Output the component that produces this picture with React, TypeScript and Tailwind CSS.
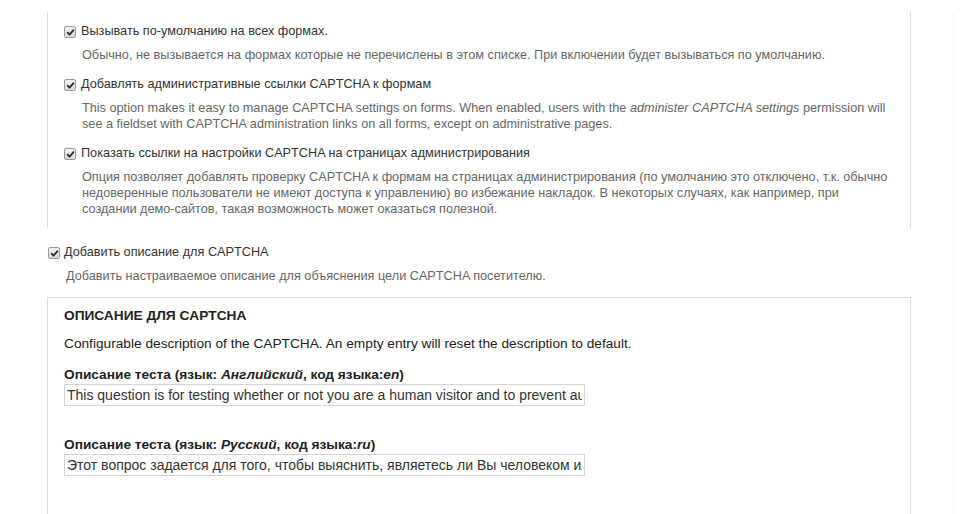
import React from 'react';

// Grey GTK-style checked checkbox
function Check() {
  return (
    <span className="inline-flex h-[12px] w-[12px] shrink-0 items-center justify-center rounded-[2px] border border-[#9a9a9a] bg-gradient-to-b from-[#f4f4f4] to-[#d8d8d8]">
      <svg viewBox="0 0 10 10" className="h-[9px] w-[9px]">
        <path d="M1.8 5.2 L4 7.4 L8.3 2.4" fill="none" stroke="#2b2b2b" strokeWidth="1.9" strokeLinecap="round" strokeLinejoin="round" />
      </svg>
    </span>
  );
}

function Option({ label, children, first }: { label: string; children: React.ReactNode; first?: boolean }) {
  return (
    <div className={first ? '' : 'mt-[13px]'}>
      <label className="flex h-[18px] items-center gap-[5px] text-[12.7px] text-[#333]">
        <Check />
        <span>{label}</span>
      </label>
      <div className="mt-[6px] pl-[18px] text-[12.7px] leading-[16px] text-[#666]">{children}</div>
    </div>
  );
}

function LangField({ lang, code, value, className }: { lang: string; code: string; value: string; className?: string }) {
  return (
    <div className={className}>
      <div className="h-[18px] text-[13.7px] font-bold leading-[18px] text-[#222]">
        Описание теста (язык: <em>{lang}</em>, код языка:<em>{code}</em>)
      </div>
      <input
        readOnly
        value={value}
        className="block h-[22px] w-[521px] border border-[#d4d4d4] bg-white px-[2px] text-[14px] text-[#333] outline-none"
      />
    </div>
  );
}

export default function App() {
  return (
    <div className="h-[514px] w-[962px] overflow-hidden bg-white font-['Liberation_Sans',Arial,sans-serif]">
      <div className="mt-[12px] w-[954px] border-r border-[#f2f2f2] pl-[47px]">
        {/* Nested settings */}
        <div className="w-[864px] border-x border-[#dcdcdc] pb-[11px] pl-[16px] pt-[11px]">
          <Option label="Вызывать по-умолчанию на всех формах." first>
            Обычно, не вызывается на формах которые не перечислены в этом списке. При включении будет вызываться по умолчанию.
          </Option>
          <Option label="Добавлять административные ссылки CAPTCHA к формам">
            This option makes it easy to manage CAPTCHA settings on forms. When enabled, users with the{' '}
            <em>administer CAPTCHA settings</em> permission will
            <br />
            see a fieldset with CAPTCHA administration links on all forms, except on administrative pages.
          </Option>
          <Option label="Показать ссылки на настройки CAPTCHA на страницах администрирования">
            Опция позволяет добавлять проверку CAPTCHA к формам на страницах администрирования (по умолчанию это отключено, т.к. обычно
            <br />
            недоверенные пользователи не имеют доступа к управлению) во избежание накладок. В некоторых случаях, как например, при
            <br />
            создании демо-сайтов, такая возможность может оказаться полезной.
          </Option>
        </div>

        {/* Description toggle */}
        <div className="mt-[16px] pl-px">
          <label className="flex h-[18px] items-center gap-[4px] text-[12.7px] text-[#333]">
            <Check />
            <span>Добавить описание для CAPTCHA</span>
          </label>
          <div className="mt-[6px] pl-[18px] text-[12.7px] leading-[16px] text-[#666]">
            Добавить настраиваемое описание для объяснения цели CAPTCHA посетителю.
          </div>
        </div>

        {/* Description fieldset */}
        <div className="mt-[13px] h-[240px] w-[864px] border-x border-t border-[#dcdcdc] pl-[16px] pt-[9px]">
          <div className="h-[18px] text-[13.7px] font-bold uppercase leading-[18px] text-[#222]">Описание для CAPTCHA</div>
          <div className="mt-[10px] h-[18px] text-[13.7px] leading-[18px] text-[#222]">
            Configurable description of the CAPTCHA. An empty entry will reset the description to default.
          </div>
          <LangField
            className="mt-[13px]"
            lang="Английский"
            code="en"
            value="This question is for testing whether or not you are a human visitor and to prevent automated spam submissions."
          />
          <LangField
            className="mt-[30px]"
            lang="Русский"
            code="ru"
            value="Этот вопрос задается для того, чтобы выяснить, являетесь ли Вы человеком или представляете из себя автоматическую спам-рассылку."
          />
        </div>
      </div>
    </div>
  );
}
